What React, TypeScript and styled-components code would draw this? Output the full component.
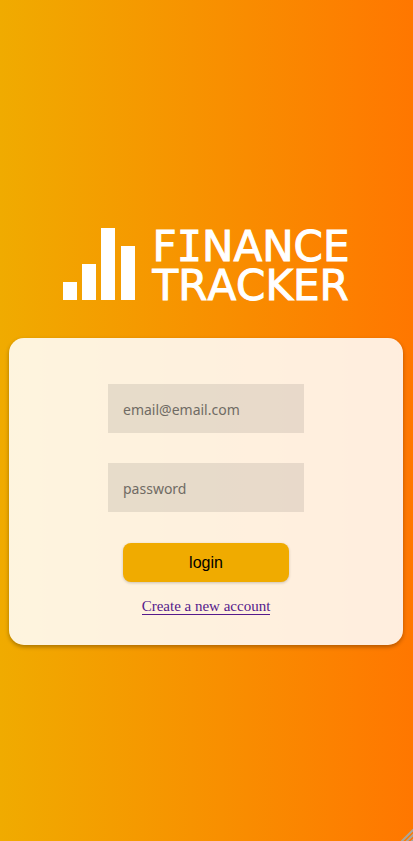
import React from "react";
import styled, { createGlobalStyle } from "styled-components";

const GlobalStyle = createGlobalStyle`
  *, *::before, *::after { box-sizing: border-box; }
  body { margin: 0; }
`;

const Page = styled.main`
  min-height: 100vh;
  display: flex;
  flex-direction: column;
  align-items: center;
  justify-content: center;
  gap: 33px;
  padding: 31px 10px 0 9px;
  background: linear-gradient(to right, #f0ab00, #ff7700);
`;

const Brand = styled.h1`
  display: flex;
  align-items: flex-end;
  gap: 16px;
  margin: 0;
  color: #fff;
`;

const Bars = styled.svg`
  display: block;
  width: 74px;
  height: 78px;
  fill: currentColor;
`;

const BrandName = styled.span`
  display: flex;
  flex-direction: column;
  font: 400 42px/39px "DejaVu Sans", sans-serif;
  font-kerning: none;
  -webkit-text-stroke: 1px #fff;
  stroke-linejoin: round;
`;

const SerifLetter = styled.span`
  font-family: "DejaVu Sans Mono", monospace;
`;

const Card = styled.form`
  width: 100%;
  display: flex;
  flex-direction: column;
  align-items: center;
  padding: 46px 16px 30px;
  border-radius: 15px;
  background: rgba(255, 255, 255, 0.87);
  box-shadow: 0 2px 4px rgba(0, 0, 0, 0.3);
`;

const Field = styled.input`
  width: 196px;
  height: 49px;
  margin-bottom: 30px;
  padding: 2px 15px 0;
  border: 0;
  border-radius: 0;
  background: rgba(0, 0, 0, 0.09);
  color: #222;
  font: 14px "Noto Sans", sans-serif;

  &::placeholder {
    color: #706b64;
    opacity: 1;
  }
`;

const LoginButton = styled.button`
  width: 166px;
  height: 39px;
  margin: 1px 0 17px;
  border: 0;
  border-radius: 8px;
  background: #f0ab00;
  color: #000;
  font: 16px "Liberation Sans", sans-serif;
  box-shadow: 0 1px 3px rgba(0, 0, 0, 0.2);
  cursor: pointer;
`;

const SignupLink = styled.a`
  border-bottom: 1px solid #551a8b;
  color: #551a8b;
  font: 15px/15px "Liberation Serif", serif;
  text-decoration: none;
`;

const Grip = styled.svg`
  position: fixed;
  right: 0;
  bottom: 0;
  width: 12px;
  height: 12px;
  fill: none;
  stroke: #aaa79b;
  stroke-width: 2;
`;

export default function App() {
  return (
    <>
      <GlobalStyle />
      <Page>
        <Brand>
          <Bars viewBox="0 0 74 78" aria-hidden="true">
            <rect x="0" y="55" width="14" height="18" />
            <rect x="19" y="37" width="14" height="36" />
            <rect x="38" y="1" width="14" height="72" />
            <rect x="58" y="19" width="14" height="54" />
          </Bars>
          <BrandName>
            <span>F<SerifLetter>I</SerifLetter>NANCE</span>
            <span>TRACKER</span>
          </BrandName>
        </Brand>
        <Card onSubmit={(event: React.FormEvent) => event.preventDefault()}>
          <Field type="email" placeholder="email@email.com" aria-label="Email" />
          <Field type="password" placeholder="password" aria-label="Password" />
          <LoginButton type="submit">login</LoginButton>
          <SignupLink href="#signup">Create a new account</SignupLink>
        </Card>
      </Page>
      <Grip viewBox="0 0 12 12" aria-hidden="true">
        <path d="M0 13 13 0M5 13l8-8M10 13l3-3" />
      </Grip>
    </>
  );
}
